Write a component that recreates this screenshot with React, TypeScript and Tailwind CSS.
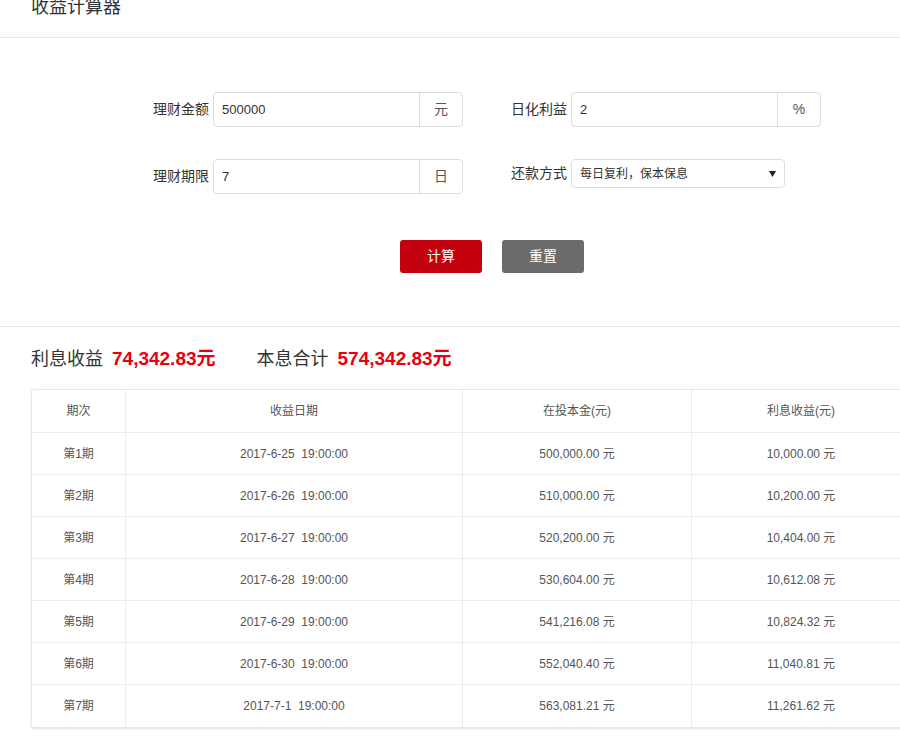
import React from "react";

const rows = [
  ["第1期", "2017-6-25  19:00:00", "500,000.00 元", "10,000.00 元"],
  ["第2期", "2017-6-26  19:00:00", "510,000.00 元", "10,200.00 元"],
  ["第3期", "2017-6-27  19:00:00", "520,200.00 元", "10,404.00 元"],
  ["第4期", "2017-6-28  19:00:00", "530,604.00 元", "10,612.08 元"],
  ["第5期", "2017-6-29  19:00:00", "541,216.08 元", "10,824.32 元"],
  ["第6期", "2017-6-30  19:00:00", "552,040.40 元", "11,040.81 元"],
  ["第7期", "2017-7-1  19:00:00", "563,081.21 元", "11,261.62 元"],
];

function InputGroup({ value, unit }: { value: string; unit: string }) {
  return (
    <div className="flex h-[35px] w-[250px] rounded-[4px] border border-[#dddddd] bg-white">
      <div className="flex flex-1 items-center pl-[8px] text-[13px] text-[#333]">{value}</div>
      <div className="flex w-[43px] items-center justify-center border-l border-[#dddddd] text-[14px] text-[#555]">
        {unit}
      </div>
    </div>
  );
}

export default function App() {
  return (
    <div
      className="relative h-[736px] w-[900px] overflow-hidden bg-white text-[#333]"
      style={{ fontFamily: '"Liberation Sans", "Noto Sans CJK SC", sans-serif' }}
    >
      {/* header */}
      <div className="h-[38px] border-b border-[#e8e8e8] pl-[31px]">
        <div className="text-[18px] leading-[15px] text-[#333]">收益计算器</div>
      </div>

      {/* form */}
      <div className="h-[289px] border-b border-[#e8e8e8] pt-[54px]">
        <div className="flex pl-[153px]">
          <div className="flex flex-col gap-[32px]">
            <div className="flex items-center gap-[4px]">
              <span className="w-[56px] whitespace-nowrap text-[14px] text-[#333]">理财金额</span>
              <InputGroup value="500000" unit="元" />
            </div>
            <div className="flex items-center gap-[4px]">
              <span className="w-[56px] whitespace-nowrap text-[14px] text-[#333]">理财期限</span>
              <InputGroup value="7" unit="日" />
            </div>
          </div>
          <div className="ml-[48px] flex flex-col gap-[32px]">
            <div className="flex items-center gap-[4px]">
              <span className="w-[56px] whitespace-nowrap text-[14px] text-[#333]">日化利益</span>
              <InputGroup value="2" unit="%" />
            </div>
            <div className="flex h-[35px] items-start gap-[4px]">
              <span className="flex h-[29px] w-[56px] items-center whitespace-nowrap text-[14px] text-[#333]">
                还款方式
              </span>
              <div className="flex h-[29px] w-[214px] items-center justify-between rounded-[4px] border border-[#dddddd] pl-[8px] pr-[8px] text-[12px] text-[#333]">
                <span>每日复利，保本保息</span>
                <svg width="7" height="6" viewBox="0 0 7 6">
                  <path d="M0 0 H7 L3.5 6 Z" fill="#222" />
                </svg>
              </div>
            </div>
          </div>
        </div>
        <div className="mt-[46px] flex gap-[20px] pl-[400px]">
          <button className="h-[33px] w-[82px] rounded-[3px] bg-[#c4000f] text-[14px] text-white">计算</button>
          <button className="h-[33px] w-[82px] rounded-[3px] bg-[#6b6b6b] text-[14px] text-white">重置</button>
        </div>
      </div>

      {/* summary */}
      <div className="flex items-center pl-[31px] pt-[20px] text-[18px] leading-[24px]">
        <span className="text-[#333]">利息收益</span>
        <span className="ml-[9px] text-[19px] font-bold text-[#e60012]">74,342.83元</span>
        <span className="ml-[41px] text-[#333]">本息合计</span>
        <span className="ml-[9px] text-[19px] font-bold text-[#e60012]">574,342.83元</span>
      </div>

      {/* table */}
      <div className="ml-[31px] mt-[18px] w-[880px] rounded-[3px] border border-[#e8e8e8] shadow-[0_1px_2px_rgba(0,0,0,0.12)]">
        <div className="grid grid-cols-[94px_337px_229px_1fr] text-[12px] text-[#555]">
          {["期次", "收益日期", "在投本金(元)", "利息收益(元)"].map((h, i) => (
            <div
              key={h}
              className={`flex h-[43px] items-center justify-center border-b border-[#ececec] ${i < 3 ? "border-r" : ""}`}
            >
              {h}
            </div>
          ))}
          {rows.map((r, ri) =>
            r.map((c, i) => (
              <div
                key={`${ri}-${i}`}
                className={`flex h-[42px] items-center justify-center whitespace-pre border-[#ececec] ${
                  ri < rows.length - 1 ? "border-b" : ""
                } ${i < 3 ? "border-r" : ""}`}
              >
                {c}
              </div>
            ))
          )}
        </div>
      </div>
    </div>
  );
}
